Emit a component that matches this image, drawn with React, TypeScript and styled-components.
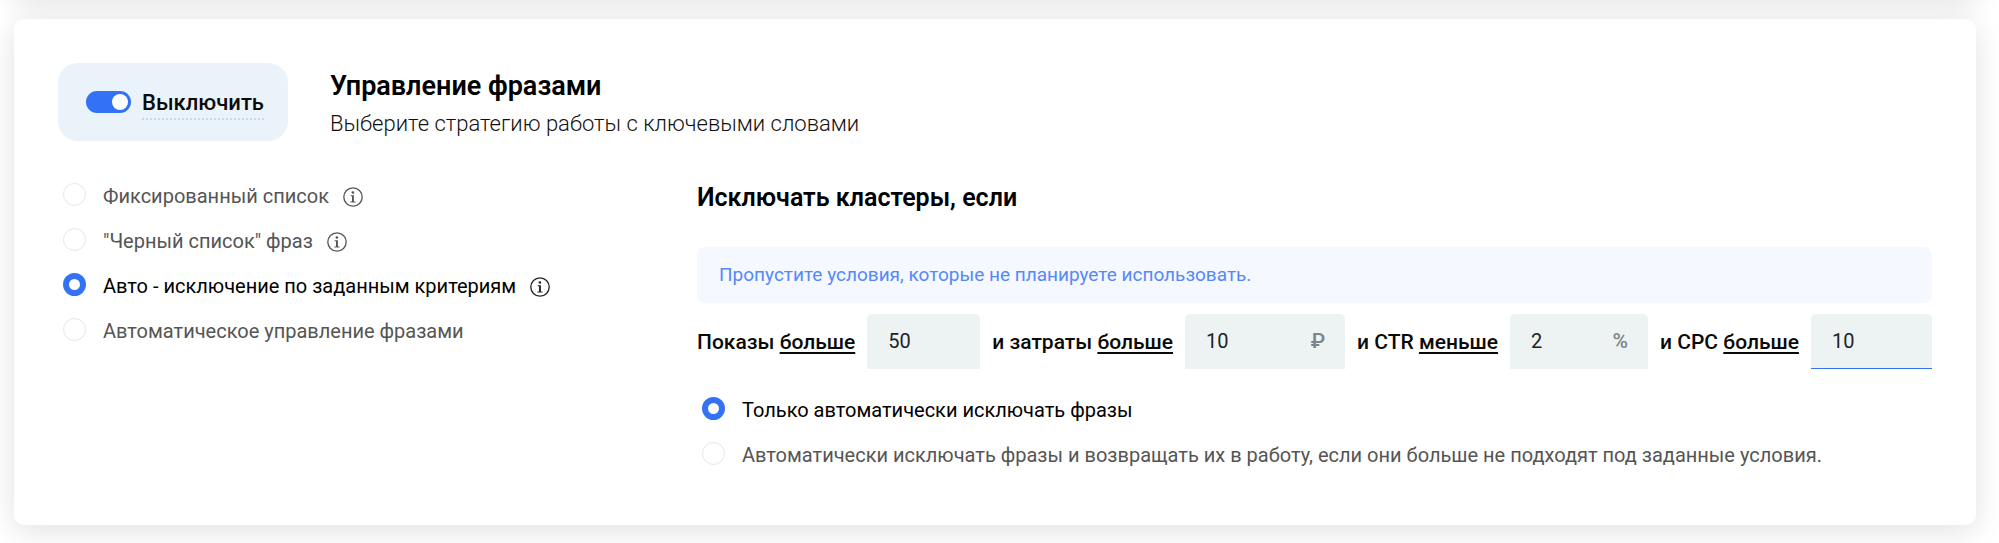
import React, { useState } from "react";
import styled, { createGlobalStyle } from "styled-components";

const GlobalStyle = createGlobalStyle`
  *, *::before, *::after { box-sizing: border-box; }
  body {
    margin: 0;
    background: #fff;
    color: #0a0a0a;
    font-family: Roboto, "Noto Sans", sans-serif;
    font-size: 20px;
    line-height: 24px;
  }
  button, input { font: inherit; color: inherit; }
`;

const Page = styled.main`
  padding: 0 23px 18px 14px;
`;

const Card = styled.section`
  background: #fff;
  border-radius: 10px;
  box-shadow: 0 6px 30px rgba(0, 0, 0, 0.12);
  padding: 44px 44px 51px;
`;

const PreviousCard = styled(Card)`
  height: 200px;
  margin-top: -203px;
  margin-bottom: 22px;
`;

const Header = styled.header`
  display: flex;
  align-items: center;
  gap: 42px;
`;

const PowerBox = styled.label`
  display: flex;
  align-items: center;
  gap: 11px;
  height: 78px;
  padding: 0 24px 0 28px;
  border-radius: 20px;
  background: #eaf3fa;
  font-size: 22px;
  line-height: 28px;
  font-weight: 500;
  cursor: pointer;
`;

const PowerText = styled.span`
  margin-top: 4px;
  padding-bottom: 1px;
  border-bottom: 2px dotted #cdd8e4;
`;

const Switch = styled.input`
  appearance: none;
  display: flex;
  align-items: center;
  justify-content: flex-start;
  width: 45px;
  height: 22px;
  margin: 0;
  padding: 0 3px;
  border-radius: 11px;
  background: #c3ccd6;
  cursor: pointer;

  &::before {
    content: "";
    width: 16px;
    height: 16px;
    border-radius: 50%;
    background: #fff;
  }

  &:checked {
    justify-content: flex-end;
    background: #3372f5;
  }
`;

const Heading = styled.div`
  padding-top: 4px;
`;

const Title = styled.h2`
  margin: 0 0 4px;
  font-size: 27px;
  line-height: 36px;
  font-weight: 600;
  color: #000;
`;

const Subtitle = styled.p`
  margin: 0;
  font-size: 22px;
  line-height: 32px;
  font-weight: 300;
  color: #111;
`;

const Columns = styled.div`
  display: grid;
  grid-template-columns: 595fr 1235fr;
  column-gap: 44px;
  margin-top: 32px;
`;

const RadioGroup = styled.div`
  display: flex;
  flex-direction: column;
  gap: 13px;
  padding: 5px;
`;

const RadioRow = styled.div`
  display: flex;
  align-items: center;
  gap: 14px;
  height: 32px;
`;

const RadioLabel = styled.label<{ $active: boolean }>`
  display: flex;
  align-items: center;
  gap: 17px;
  color: ${(p) => (p.$active ? "#000" : "#555")};
  cursor: pointer;
`;

const RadioText = styled.span`
  padding-top: 4px;
`;

const Radio = styled.input`
  appearance: none;
  flex: none;
  width: 23px;
  height: 23px;
  margin: 0;
  border: 1px solid #dfe8ee;
  border-radius: 50%;
  background: #fff;
  cursor: pointer;

  &:checked {
    border: 6px solid #3372f5;
  }
`;

const HintButton = styled.button<{ $active: boolean }>`
  display: flex;
  padding: 6px 0 0;
  border: 0;
  background: none;
  color: ${(p) => (p.$active ? "#222" : "#555")};
  cursor: pointer;
`;

const Rules = styled.section`
  display: flex;
  flex-direction: column;
  min-width: 0;
`;

const RulesTitle = styled.h3`
  margin: 9px 0 33px;
  font-size: 25px;
  line-height: 32px;
  font-weight: 600;
  color: #000;
`;

const Notice = styled.p`
  margin: 0 0 11px;
  padding: 16px 22px;
  border-radius: 8px;
  background: #f5f8ff;
  color: #5688f7;
  font-size: 19px;
`;

const Conditions = styled.div`
  display: flex;
  align-items: center;
  gap: 12px;
  margin-bottom: 18px;
`;

const ConditionLabel = styled.div`
  flex: none;
  font-size: 21px;
  font-weight: 500;
`;

const Comparison = styled.button`
  padding: 0;
  border: 0;
  background: none;
  text-decoration: underline;
  text-decoration-thickness: 2px;
  text-underline-offset: 3px;
  cursor: pointer;
`;

const Field = styled.div<{ $size: number; $focused?: boolean }>`
  flex: 1 1 ${(p) => p.$size}px;
  min-width: 0;
  display: flex;
  align-items: center;
  height: 55px;
  padding: 0 20px 0 21px;
  border-radius: 5px 5px 0 0;
  border-bottom: 1px solid ${(p) => (p.$focused ? "#3372f5" : "#edf2f3")};
  background: #edf2f3;
  color: #222;
`;

const FieldInput = styled.input`
  flex: 1;
  width: 0;
  min-width: 0;
  padding: 0;
  border: 0;
  outline: 0;
  background: none;
`;

const Unit = styled.span`
  color: #7b868c;
  font-size: 21px;
  font-weight: 500;
`;

const InfoIcon = () => (
  <svg width="20" height="20" viewBox="0 0 20 20" fill="none" aria-hidden="true">
    <circle cx="10" cy="10" r="9.2" stroke="currentColor" strokeWidth="1.3" />
    <circle cx="9.9" cy="5.5" r="1.3" fill="currentColor" />
    <path d="M7.6 8.3h3.3v6.1h1.6v1H7.4v-1H9V9.3H7.6z" fill="currentColor" />
  </svg>
);

type Option = { id: string; text: string; hint?: boolean };

const strategies: Option[] = [
  { id: "fixed", text: "Фиксированный список", hint: true },
  { id: "black", text: '"Черный список" фраз', hint: true },
  { id: "criteria", text: "Авто - исключение по заданным критериям", hint: true },
  { id: "auto", text: "Автоматическое управление фразами" },
];

const modes: Option[] = [
  { id: "exclude", text: "Только автоматически исключать фразы" },
  {
    id: "return",
    text: "Автоматически исключать фразы и возвращать их в работу, если они больше не подходят под заданные условия.",
  },
];

const conditions = [
  { id: "views", name: "Показы", compare: "больше", value: "50", size: 110 },
  { id: "spend", name: "и затраты", compare: "больше", value: "10", unit: "₽", size: 157 },
  { id: "ctr", name: "и CTR", compare: "меньше", value: "2", unit: "%", size: 135 },
  { id: "cpc", name: "и CPC", compare: "больше", value: "10", size: 118, focused: true },
];

function Options({ name, label, items, initial }: { name: string; label: string; items: Option[]; initial: string }) {
  const [value, setValue] = useState(initial);
  return (
    <RadioGroup role="radiogroup" aria-label={label}>
      {items.map((o) => (
        <RadioRow key={o.id}>
          <RadioLabel $active={o.id === value}>
            <Radio type="radio" name={name} checked={o.id === value} onChange={() => setValue(o.id)} />
            <RadioText>{o.text}</RadioText>
          </RadioLabel>
          {o.hint && (
            <HintButton type="button" aria-label="Подсказка" $active={o.id === value}>
              <InfoIcon />
            </HintButton>
          )}
        </RadioRow>
      ))}
    </RadioGroup>
  );
}

export default function App() {
  const [enabled, setEnabled] = useState(true);
  return (
    <>
      <GlobalStyle />
      <Page>
        <PreviousCard aria-hidden="true" />
        <Card>
          <Header>
            <PowerBox>
              <Switch type="checkbox" role="switch" checked={enabled} onChange={() => setEnabled(!enabled)} />
              <PowerText>{enabled ? "Выключить" : "Включить"}</PowerText>
            </PowerBox>
            <Heading>
              <Title>Управление фразами</Title>
              <Subtitle>Выберите стратегию работы с ключевыми словами</Subtitle>
            </Heading>
          </Header>
          <Columns>
            <Options name="strategy" label="Стратегия" items={strategies} initial="criteria" />
            <Rules>
              <RulesTitle>Исключать кластеры, если</RulesTitle>
              <Notice>Пропустите условия, которые не планируете использовать.</Notice>
              <Conditions>
                {conditions.map((c) => (
                  <React.Fragment key={c.id}>
                    <ConditionLabel>
                      <label htmlFor={c.id}>{c.name}</label> <Comparison type="button">{c.compare}</Comparison>
                    </ConditionLabel>
                    <Field $size={c.size} $focused={c.focused}>
                      <FieldInput id={c.id} defaultValue={c.value} inputMode="numeric" />
                      {c.unit && <Unit>{c.unit}</Unit>}
                    </Field>
                  </React.Fragment>
                ))}
              </Conditions>
              <Options name="mode" label="Режим" items={modes} initial="exclude" />
            </Rules>
          </Columns>
        </Card>
      </Page>
    </>
  );
}
